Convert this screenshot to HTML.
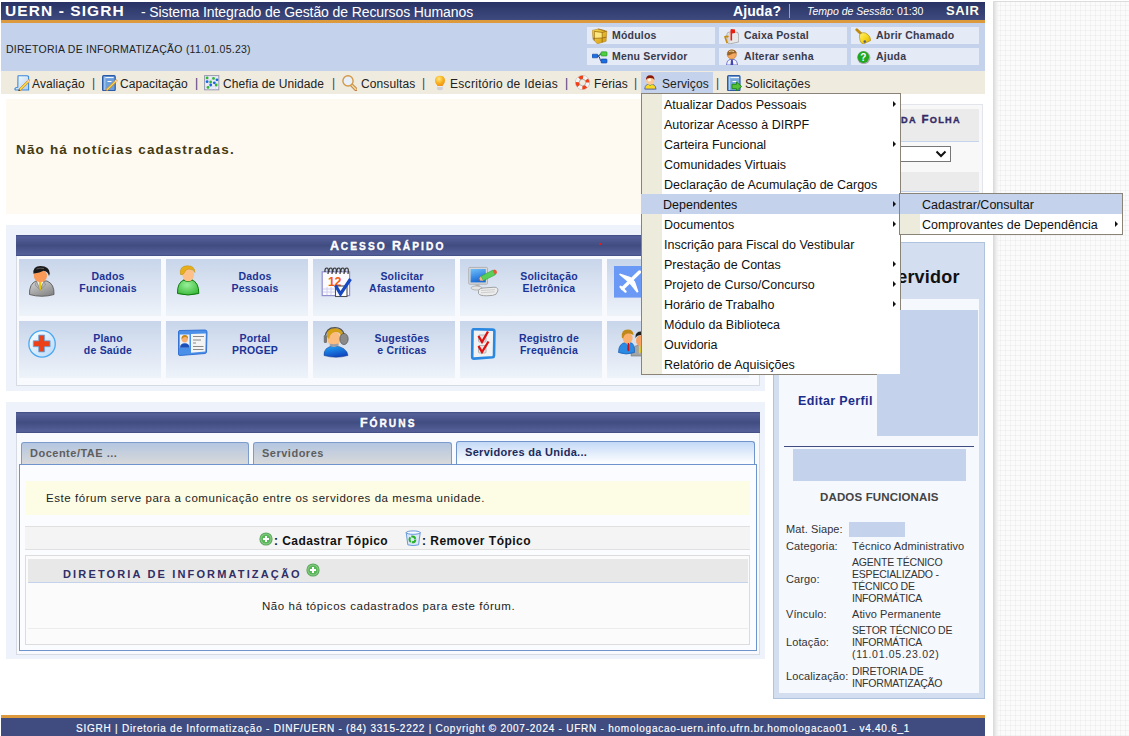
<!DOCTYPE html>
<html><head><meta charset="utf-8">
<style>
*{box-sizing:border-box}
html,body{margin:0;padding:0}
body{width:1129px;height:736px;overflow:hidden;position:relative;font-family:"Liberation Sans",sans-serif;
 background-color:#fbfbfb;
 background-image:repeating-linear-gradient(90deg,rgba(0,0,0,0.03) 0 1px,transparent 1px 5px),repeating-linear-gradient(0deg,rgba(0,0,0,0.03) 0 1px,transparent 1px 5px);}
.a{position:absolute}
.pg{left:0;top:0;width:993px;height:736px;background:#fff}
.shadow{left:993px;top:0;width:6px;height:736px;background:linear-gradient(90deg,#d8d8d8,#f0f0f0 60%,rgba(255,255,255,0))}
.topline{left:993px;top:1px;width:136px;height:1px;background:#dcdcdc}
/* header */
.hd{left:1px;top:2px;width:984px;height:18px;background:linear-gradient(#283264,#3e4a7f)}
.orange{left:1px;top:20px;width:984px;height:3px;background:#dd9a3c}
.lb{left:1px;top:23px;width:984px;height:48px;background:#c4d2eb}
.mbar{left:1px;top:71px;width:984px;height:23px;background:#efebdf}
.t{white-space:nowrap;line-height:1}
.btn{height:17px;width:128px;background:#e4eaf6}
.btn span{position:absolute;left:25px;top:2px;font-size:10.5px;font-weight:bold;color:#3a3a4c;letter-spacing:0.2px}
.btn svg{position:absolute;left:5px;top:0px}
.mi{font-size:12px;color:#222;top:78px;letter-spacing:0.1px}
.sep{font-size:12px;color:#3a3a78;top:77px}
.ic16{width:16px;height:16px}
.tile{width:142px;height:57px;background:linear-gradient(#c8d5ea,#eef3fa)}
.tl{left:39px;width:100px;top:11px;text-align:center;font-size:10.5px;font-weight:bold;color:#1c3496;line-height:12px;letter-spacing:0.2px}
.tab{top:442px;height:23px;border:1px solid #7c9dcc;border-bottom:none;border-radius:3px 3px 0 0;background:linear-gradient(#b4c6e0,#dadada)}
.tab span{position:absolute;left:8px;top:4px;font-size:11px;font-weight:bold;color:#5e5e5e;white-space:nowrap;letter-spacing:0.5px}
.tab.act{top:441px;height:23px;background:linear-gradient(#c4d9f6,#fafcff 90%);border-color:#6f94cc}
.tab.act span{color:#1c2a5c;top:4px;letter-spacing:0.3px}
.sd{font-size:11px;color:#333;white-space:nowrap;line-height:12px;letter-spacing:0.1px}
.up{font-size:10.5px;letter-spacing:-0.2px}
.dd{border:1px solid #8a8478;background:#fff}
.strip{left:0;top:0;width:20px;height:100%;background:#ecebdc}
.row{left:0;width:100%;height:20px}
.row.hl{background:#c4d2eb}
.row span{position:absolute;left:22px;top:4px;font-size:12.5px;color:#111;white-space:nowrap}
.arr{position:absolute;right:4px;top:6.5px;width:0;height:0;border-left:3.5px solid #111;border-top:3.5px solid transparent;border-bottom:3.5px solid transparent}
.sc{font-size:12.5px;font-weight:bold;color:#fff;letter-spacing:1.8px;-webkit-text-stroke:0.35px currentColor}
.sc s{text-decoration:none;font-size:10.2px;letter-spacing:2.05px}
.fo s{font-size:9.2px;letter-spacing:1.3px}
</style></head><body>
<div class="a pg"></div>
<div class="a shadow"></div>
<div class="a" style="left:993px;top:0;width:136px;height:1px;background:#fff"></div><div class="a topline"></div>

<!-- HEADER -->
<div class="a hd"></div>
<div class="a orange"></div>
<div class="a lb"></div>
<div class="a mbar"></div>
<div class="a t" style="left:5px;top:3px;font-size:15.5px;font-weight:bold;color:#fff;letter-spacing:1.08px">UERN - SIGRH</div>
<div class="a t" style="left:141px;top:5px;font-size:14px;color:#fff;letter-spacing:-0.1px">- Sistema Integrado de Gestão de Recursos Humanos</div>
<div class="a t" style="left:733px;top:4px;font-size:14px;font-weight:bold;color:#fff;letter-spacing:0.1px">Ajuda?</div>
<div class="a" style="left:789px;top:4px;width:1px;height:14px;background:#dd9a3c"></div>
<div class="a t" style="left:807px;top:6px;font-size:10.5px;color:#fff"><i>Tempo de Sessão:</i> 01:30</div>
<div class="a t" style="left:946px;top:4px;font-size:13px;font-weight:bold;color:#fffbe8;letter-spacing:0.6px">SAIR</div>

<div class="a t" style="left:6px;top:44px;font-size:10.5px;color:#222;letter-spacing:0.25px">DIRETORIA DE INFORMATIZAÇÃO (11.01.05.23)</div>


<!-- module buttons -->
<div class="a btn" style="left:587px;top:27px"><span>Módulos</span></div>
<div class="a btn" style="left:719px;top:27px"><span>Caixa Postal</span></div>
<div class="a btn" style="left:851px;top:27px"><span>Abrir Chamado</span></div>
<div class="a btn" style="left:587px;top:48px"><span>Menu Servidor</span></div>
<div class="a btn" style="left:719px;top:48px"><span>Alterar senha</span></div>
<div class="a btn" style="left:851px;top:48px"><span>Ajuda</span></div>
<svg class="a" style="left:592px;top:28px" width="16" height="16" viewBox="0 0 16 16">
 <defs><linearGradient id="gc" x1="0" y1="0" x2="1" y2="1"><stop offset="0" stop-color="#f8d850"/><stop offset="1" stop-color="#d49a10"/></linearGradient></defs>
 <path d="M0.2 2.4 L6.2 1 L14.8 3.2 L14.1 13.3 L5.3 15.8 L1 11.2Z" fill="url(#gc)"/>
 <path d="M2.4 3.5 L10.2 4.4 L10.2 10 L2.4 10.4Z" fill="#fce680"/>
 <path d="M2.3 3.4 L2.3 12.6 M2.3 3.4 L10.2 4.4 L14.8 3.2 M10.2 4.4 L10.2 14.6 M1 10.4 L10.2 10 L14.3 9.2 M6.2 1 L13.2 2.8" stroke="#8a5a08" stroke-width="0.8" fill="none" opacity="0.85"/>
 <path d="M0.2 2.4 L6.2 1 L14.8 3.2 L14.1 13.3 L5.3 15.8 L1 11.2Z" fill="none" stroke="#a87810" stroke-width="0.5"/>
</svg>
<svg class="a" style="left:723px;top:28px" width="16" height="16" viewBox="0 0 16 16">
 <path d="M4 6 Q4 4 7 4 L13 4 Q15.7 4 15.7 7 L15.7 14 L6 16 L4 14Z" fill="#e8e8e8" stroke="#a0a0a0" stroke-width="0.8"/>
 <path d="M6 16 L6 6.5 Q6 5 7.5 4.5" stroke="#c0c0c0" stroke-width="0.8" fill="none"/>
 <path d="M1 8.5 Q3 7 6 8 L5 9.5 L3 9.5 L5 15 L3.5 15.5 Z" fill="#c88a10"/>
 <rect x="7.5" y="1.5" width="1.6" height="11" fill="#e02010"/>
 <path d="M8 1 L12 1.5 L12 5 L9 5.5Z" fill="#e82010"/>
</svg>
<svg class="a" style="left:855px;top:28px" width="16" height="16" viewBox="0 0 16 16">
 <path d="M1.8 1.8 L6 5.8" stroke="#c08a10" stroke-width="2.8" stroke-linecap="round"/>
 <defs><linearGradient id="bel" x1="0" y1="0" x2="1" y2="1"><stop offset="0" stop-color="#fff27a"/><stop offset="0.5" stop-color="#f8d820"/><stop offset="1" stop-color="#d8a808"/></linearGradient></defs>
 <path d="M4.6 6.6 Q8 3 12.2 6 Q15.8 8.8 15.6 12.6 L8.4 15.9 Q5.6 15.4 5 12.2 Q4.2 9.2 4.6 6.6Z" fill="url(#bel)" stroke="#a88408" stroke-width="0.6"/>
 <circle cx="9.8" cy="13.6" r="1.3" fill="#5a6478"/>
</svg>
<svg class="a" style="left:592px;top:48px" width="16" height="16" viewBox="0 0 16 16">
 <path d="M6 8 Q7.5 8 8 6.5 Q8.5 6 9 6 M6 8 Q7.5 8 8 11 Q8.5 13 9 13" stroke="#303890" stroke-width="1" fill="none"/>
 <path d="M7 8 Q8 6 9 5.8" stroke="#30a030" stroke-width="1.2" fill="none"/>
 <rect x="0" y="6.2" width="6" height="3.6" rx="0.8" fill="#1a70e0" stroke="#1a3a9a" stroke-width="0.6"/>
 <rect x="9" y="3.8" width="6" height="4.2" rx="0.8" fill="#50d040" stroke="#208a20" stroke-width="0.6"/>
 <rect x="9" y="11" width="6" height="4" rx="0.8" fill="#1a70e0" stroke="#1a3a9a" stroke-width="0.6"/>
</svg>
<svg class="a" style="left:724px;top:48px" width="16" height="17" viewBox="0 0 16 17">
 <path d="M2.5 17 Q3 12 6 11.5 L10 11.5 Q13 12 13.5 17Z" fill="#f0f0ff" stroke="#6a70c8" stroke-width="0.9"/>
 <path d="M7 11.8 L8.8 11.8 L9.3 17 L6.5 17Z" fill="#4048b0"/>
 <circle cx="7.8" cy="6.4" r="4.6" fill="#f4a860" stroke="#b06a20" stroke-width="0.5"/>
 <path d="M3.2 7 Q2.8 1.8 7.8 1.8 Q12.6 1.8 12.6 5.6 Q10 4.6 7 6.6 Q5 8 3.2 7Z" fill="#9a6428"/>
 <path d="M5 3.5 Q7.5 2.5 10 3.5" stroke="#e8d0a0" stroke-width="1" fill="none"/>
</svg>
<svg class="a" style="left:855px;top:48px" width="16" height="16" viewBox="0 0 16 16">
 <circle cx="8.8" cy="9.6" r="6.6" fill="#9a9a9a" opacity="0.8"/>
 <circle cx="8.3" cy="9.1" r="5.8" fill="#20a820"/>
 <text x="8.4" y="12.9" font-size="10" font-weight="bold" fill="#fff" text-anchor="middle" font-family="Liberation Sans">?</text>
</svg>

<!-- menu bar -->
<div class="a" style="left:641px;top:72px;width:72px;height:21px;background:#c4d2eb"></div>
<svg class="a" style="left:14px;top:75px" width="16" height="16" viewBox="0 0 16 16">
 <defs><linearGradient id="pp1" x1="0" y1="0" x2="1" y2="1"><stop offset="0" stop-color="#ffffff"/><stop offset="1" stop-color="#a8ccf0"/></linearGradient></defs>
 <path d="M4.2 0.8 L13 0.8 Q15 0.8 14.6 3 L14.6 15 L2 15 Q0.6 15 1 13.4 Q1.6 12.2 3.8 12.2 L4 1Z" fill="url(#pp1)" stroke="#3a88d8" stroke-width="1.1"/>
 <path d="M6 16 L15.2 7 Q16 6 15.6 5 L14.6 4.6 L5 14 Z" fill="#f4d848" stroke="#d08830" stroke-width="0.8"/>
 <path d="M13.8 5.2 L15.5 7" stroke="#f8d0b0" stroke-width="1.6"/>
 <path d="M5 14 L6 16 L4.2 16.2Z" fill="#4a3010"/>
</svg>
<div class="a t mi" style="left:32px">Avaliação</div><div class="a t sep" style="left:92px">|</div>
<svg class="a" style="left:102px;top:75px" width="16" height="16" viewBox="0 0 16 16">
 <rect x="0.6" y="0.6" width="12.6" height="15" rx="1.2" fill="#6c9edc" stroke="#2a5aa6" stroke-width="1.2"/>
 <rect x="2.2" y="1.6" width="1.2" height="13.5" fill="#a8c8ee"/>
 <path d="M3.5 2.6 H11.6" stroke="#ffffff" stroke-width="1"/>
 <path d="M5.5 6.5 H9.5" stroke="#ffffff" stroke-width="1"/>
 <path d="M5 16 L14.6 6.8 Q15.4 6 15 5.2 L14 4.8 L4.2 14.2 Z" fill="#f4d848" stroke="#d08830" stroke-width="0.8"/>
 <path d="M13.2 5.4 L15 7" stroke="#f8d0b0" stroke-width="1.6"/>
</svg>
<div class="a t mi" style="left:120px">Capacitação</div><div class="a t sep" style="left:195px">|</div>
<svg class="a" style="left:204px;top:75px" width="16" height="16" viewBox="0 0 16 16">
 <rect x="0.6" y="0.6" width="14.2" height="14.2" fill="#eeeefa" stroke="#9898b0" stroke-width="1"/>
 <path d="M4.2 1 V14.5 M7.8 1 V14.5 M11.4 1 V14.5 M1 4.5 H14.5 M1 8 H14.5 M1 11.5 H14.5" stroke="#d8d8ec" stroke-width="0.6"/>
 <g fill="#30b830"><circle cx="3.1" cy="2.9" r="1.4"/><circle cx="9.5" cy="3.4" r="1.4"/><circle cx="6.6" cy="7" r="1.4"/><circle cx="12.2" cy="10" r="1.4"/><circle cx="4" cy="12.4" r="1.4"/></g>
 <g fill="#1a68d8"><circle cx="13" cy="4.8" r="1.4"/><circle cx="3.1" cy="6.7" r="1.4"/><circle cx="10.3" cy="7.8" r="1.4"/><circle cx="6.7" cy="10" r="1.4"/></g>
</svg>
<div class="a t mi" style="left:223px">Chefia de Unidade</div><div class="a t sep" style="left:332px">|</div>
<svg class="a" style="left:341px;top:75px" width="16" height="16" viewBox="0 0 16 16">
 <path d="M10.2 9.6 L14.8 14.2" stroke="#b86a28" stroke-width="3.4" stroke-linecap="round"/>
 <path d="M10.2 9.6 L14.8 14.2" stroke="#ecd494" stroke-width="2" stroke-linecap="round"/>
 <circle cx="7" cy="5.9" r="5.1" fill="#e8f0fa" stroke="#d49848" stroke-width="1.4"/>
</svg>
<div class="a t mi" style="left:361px">Consultas</div><div class="a t sep" style="left:422px">|</div>
<svg class="a" style="left:432px;top:75px" width="16" height="16" viewBox="0 0 16 16">
 <defs><radialGradient id="bl" cx="0.4" cy="0.3" r="0.7"><stop offset="0" stop-color="#ffe878"/><stop offset="0.6" stop-color="#f8b020"/><stop offset="1" stop-color="#f09010"/></radialGradient></defs>
 <path d="M3 5.5 Q3 0.8 8 0.8 Q13 0.8 13 5.5 Q13 8 11 10 L10.5 11.2 L5.5 11.2 L5 10 Q3 8 3 5.5Z" fill="url(#bl)"/>
 <path d="M5.2 11 H10.8 V14.5 Q8 16 5.2 14.5Z" fill="#d0d0d8"/>
 <path d="M5.2 11.5 H10.8" stroke="#f0f0ff" stroke-width="0.8"/>
</svg>
<div class="a t mi" style="left:450px;letter-spacing:0.3px">Escritório de Ideias</div><div class="a t sep" style="left:565px">|</div>
<svg class="a" style="left:575px;top:75px" width="16" height="16" viewBox="0 0 16 16">
 <circle cx="7.5" cy="7.5" r="6.9" fill="none" stroke="#8a8a8a" stroke-width="0.6"/>
 <circle cx="7.5" cy="7.5" r="5.15" fill="none" stroke="#f4f4f4" stroke-width="3.5"/>
 <circle cx="7.5" cy="7.5" r="5.15" fill="none" stroke="#f04018" stroke-width="3.5" stroke-dasharray="4.04 4.05" stroke-dashoffset="-4.04"/>
 <circle cx="7.5" cy="7.5" r="3.3" fill="none" stroke="#909090" stroke-width="0.6"/>
</svg>
<div class="a t mi" style="left:594px">Férias</div><div class="a t sep" style="left:634px">|</div>
<svg class="a" style="left:643px;top:74px" width="16" height="16" viewBox="0 0 16 16">
 <ellipse cx="7.6" cy="15" rx="6.5" ry="1.4" fill="#8890a8" opacity="0.6"/>
 <path d="M1.8 15 Q1.8 10 7.2 10 Q12.8 10 12.8 15Z" fill="#f8d820" stroke="#50609a" stroke-width="0.8"/>
 <path d="M5.5 10.4 Q7.2 12 9 10.4" stroke="#20a040" stroke-width="1" fill="none"/>
 <circle cx="7.2" cy="6.8" r="4.1" fill="#fcc890"/>
 <circle cx="6.4" cy="6" r="1.6" fill="#fff4e8"/>
 <path d="M3 6 Q2.8 1.2 7.2 1.2 Q11.6 1.2 11.4 6 Q10.5 3.8 7.2 4 Q4 3.8 3 6Z" fill="#8a1a08"/>
</svg>
<div class="a t mi" style="left:662px">Serviços</div><div class="a t sep" style="left:716px">|</div>
<svg class="a" style="left:726px;top:75px" width="16" height="16" viewBox="0 0 16 16">
 <rect x="1.6" y="0.6" width="12.4" height="15" rx="1.2" fill="#7aa8da" stroke="#2d5aa0" stroke-width="1.2"/>
 <rect x="3" y="1.6" width="1.2" height="13.5" fill="#b0d0f0"/>
 <path d="M4.5 2.6 H13" stroke="#ffffff" stroke-width="1"/>
 <path d="M6.5 6.5 H10.5" stroke="#ffffff" stroke-width="1"/>
 <path d="M6 9.3 H10.5 V7 L15.6 11.5 L10.5 15.8 V13.7 H6Z" fill="#58c038" stroke="#1a8a10" stroke-width="0.9"/>
</svg>
<div class="a t mi" style="left:745px">Solicitações</div>

<!-- news -->
<div class="a" style="left:6px;top:99px;width:753px;height:115px;background:#fffaf1"></div>
<div class="a t" style="left:16px;top:143px;font-size:13.5px;font-weight:bold;color:#443a12;letter-spacing:1.17px">Não há notícias cadastradas.</div>

<!-- acesso rapido -->
<div class="a" style="left:6px;top:225px;width:759px;height:166px;background:#eef3fb"></div>
<div class="a" style="left:16px;top:256px;width:744px;height:130px;border:1px solid #d6dbe3;border-top:none;background:#f8fafd"></div>
<div class="a" style="left:16px;top:235px;width:744px;height:21px;background:linear-gradient(#3f4a80 0,#55609a 8%,#414c81 50%,#55609a 92%,#3f4a80 100%)"></div>
<div class="a t sc" style="left:330px;top:240px">A<s>CESSO</s> R<s>ÁPIDO</s></div>
<div class="a" style="left:599px;top:243px;width:2px;height:2px;background:#e02020"></div>


<div class="a tile" style="left:19px;top:259px"><div class="a tl">Dados<br>Funcionais</div></div>
<div class="a tile" style="left:166px;top:259px"><div class="a tl">Dados<br>Pessoais</div></div>
<div class="a tile" style="left:313px;top:259px"><div class="a tl">Solicitar<br>Afastamento</div></div>
<div class="a tile" style="left:460px;top:259px"><div class="a tl">Solicitação<br>Eletrônica</div></div>
<div class="a tile" style="left:607px;top:259px"></div>
<div class="a tile" style="left:19px;top:321px"><div class="a tl">Plano<br>de Saúde</div></div>
<div class="a tile" style="left:166px;top:321px"><div class="a tl">Portal<br>PROGEP</div></div>
<div class="a tile" style="left:313px;top:321px"><div class="a tl">Sugestões<br>e Críticas</div></div>
<div class="a tile" style="left:460px;top:321px"><div class="a tl">Registro de<br>Frequência</div></div>
<div class="a tile" style="left:607px;top:321px"></div>

<!-- tile icons -->
<svg class="a" style="left:28px;top:265px" width="28" height="33" viewBox="0 0 28 33">
 <defs><linearGradient id="suit" x1="0" y1="0" x2="0.6" y2="1"><stop offset="0" stop-color="#d8d8d8"/><stop offset="1" stop-color="#8a8a8a"/></linearGradient></defs>
 <path d="M1.5 29.5 Q1 19 8 16 L19 16 Q26.5 19 26 29.5 Q14 33 1.5 29.5Z" fill="url(#suit)" stroke="#5a5a5a" stroke-width="0.9"/>
 <path d="M9 16 L12 24 L15.5 16Z" fill="#ffffff"/>
 <path d="M8.5 16.2 L11.8 24.5 L7 20 Z M16 16.2 L12.5 24.5 L17.5 20Z" fill="#b8b8b8" stroke="#707070" stroke-width="0.5"/>
 <path d="M11 16.3 L13.2 16.3 L13 24 L12.1 25.6 L11.3 24Z" fill="#f0d010" stroke="#a08800" stroke-width="0.3"/>
 <ellipse cx="12.4" cy="11" rx="6.6" ry="6.2" fill="#f99a58"/>
 <path d="M5.5 9 Q4.5 1 12.5 1 Q21.5 1 21.8 8.5 L21 11 Q19.8 6 15.5 5.8 Q12 8 6 8.5Z" fill="#1a1a1a"/>
 <path d="M8.5 4 Q12 2.6 16 3.6" stroke="#606060" stroke-width="0.9" fill="none"/>
</svg>
<svg class="a" style="left:176px;top:265px" width="26" height="32" viewBox="0 0 26 32">
 <defs><radialGradient id="grn" cx="0.45" cy="0.35" r="0.7"><stop offset="0" stop-color="#98f098"/><stop offset="1" stop-color="#38b838"/></radialGradient></defs>
 <path d="M1.5 28.5 Q1 17 9 14.5 L15 14.5 Q23 17 22.8 28.5 Q12 31.5 1.5 28.5Z" fill="url(#grn)" stroke="#0e7a0e" stroke-width="1"/>
 <path d="M7.5 14.8 Q12 18 16.5 14.8" stroke="#0e7a0e" stroke-width="1" fill="none"/>
 <ellipse cx="12.2" cy="10" rx="5.8" ry="6.3" fill="#fcc088"/>
 <path d="M4.5 9.5 Q3 0.8 11.5 0.8 Q19 0.8 18.8 7.5 Q17.5 3.8 12.5 4 Q9 4.5 8.5 7.5 Q7 10.5 4.5 9.5Z" fill="#e8b018" stroke="#b88808" stroke-width="0.5"/>
</svg>
<svg class="a" style="left:320px;top:266px" width="32" height="32" viewBox="0 0 32 32">
 <rect x="2.2" y="5.8" width="27.4" height="23.8" fill="#fbfbff" stroke="#9090d0" stroke-width="1.2"/>
 <path d="M3 23 H15 M3 26 H15 M7 21 V29 M11 21 V29" stroke="#c8c8ec" stroke-width="0.9"/>
 <g fill="none" stroke="#303030" stroke-width="1.2"><path d="M5 6 Q4.5 2 7 2 Q9 2 8 8"/><path d="M9 6 Q8.5 2 11 2 Q13 2 12 8"/><path d="M13 6 Q12.5 2 15 2 Q17 2 16 8"/><path d="M17 6 Q16.5 2 19 2 Q21 2 20 8"/><path d="M21 6 Q20.5 2 23 2 Q25 2 24 8"/><path d="M25 6 Q24.5 2 27 2 Q29 2 28 8"/></g>
 <text x="8" y="20" font-size="12.5" font-weight="bold" fill="#f45a10" font-family="Liberation Sans" letter-spacing="-0.5">12</text>
 <rect x="15.5" y="20" width="11.5" height="10.5" fill="#ffffff" stroke="#505050" stroke-width="1.1"/>
 <path d="M15.5 19.5 L20.5 28 L30.5 13" stroke="#1848c0" stroke-width="3.2" fill="none"/>
</svg>
<svg class="a" style="left:466px;top:265px" width="34" height="34" viewBox="0 0 34 34">
 <defs><linearGradient id="scr" x1="0" y1="0" x2="0.3" y2="1"><stop offset="0" stop-color="#70c0f8"/><stop offset="1" stop-color="#1a6ad8"/></linearGradient></defs>
 <rect x="2.7" y="2.4" width="18.8" height="16.8" rx="1" fill="#d8d8d8" stroke="#a8a8a8" stroke-width="0.8"/>
 <rect x="4.6" y="4" width="15.2" height="13.4" fill="url(#scr)"/>
 <rect x="9.5" y="19" width="4" height="3" fill="#b8b8b8"/>
 <ellipse cx="10.5" cy="23" rx="5.5" ry="2" fill="#e4e4e4" stroke="#a0a0a0" stroke-width="0.7"/>
 <path d="M12.5 27 Q12 23.5 17 23 L29 22.2 Q32.5 22.8 31.8 26 L30 29.2 Q28 30.8 20.5 30.8 Q13.5 30.8 12.5 28.5Z" fill="#ececec" stroke="#909090" stroke-width="0.8"/>
 <path d="M15 25.5 L29 24.6 M15 27.8 L28.5 26.8" stroke="#c0c0c0" stroke-width="0.7"/>
 <path d="M14.8 11.2 L26.8 5.2 L29.2 9.8 L17.2 15.8Z" fill="#58d058" stroke="#30a030" stroke-width="0.6"/>
 <path d="M26.8 5.2 L28.5 4.4 Q30.5 4.5 31 7 Q31.2 8.8 29.2 9.8Z" fill="#e85838"/>
 <path d="M14.8 11.2 L17.2 15.8 L12.3 15.6Z" fill="#f8b880"/>
 <path d="M13.2 14 L12.3 15.6 L14 15.6Z" fill="#303030"/>
</svg>
<svg class="a" style="left:614px;top:266px" width="27" height="32" viewBox="0 0 27 32">
 <rect x="0" y="0" width="27" height="31.6" fill="#6a9af6"/>
 <path d="M8.5 22.5 L25.5 6" stroke="#ffffff" stroke-width="3.4" stroke-linecap="round"/>
 <path d="M5 8.6 L6 7.4 L16.5 11 L21 15.5 L24.5 25.8 L23 26.8 L15.5 17.6 L11 13.6Z" fill="#ffffff"/>
 <path d="M6.6 20.8 L11.5 25.6" stroke="#ffffff" stroke-width="2.4" stroke-linecap="round"/>
</svg>
<svg class="a" style="left:28px;top:330px" width="28" height="28" viewBox="0 0 28 28">
 <defs><linearGradient id="pl" x1="0" y1="0" x2="1" y2="1"><stop offset="0" stop-color="#ffffff"/><stop offset="1" stop-color="#b8d8f8"/></linearGradient></defs>
 <circle cx="14.07" cy="13.9" r="13.2" fill="url(#pl)" stroke="#48a8f0" stroke-width="1.3"/>
 <path d="M10.7 5.1 H16.6 V10.8 H22.1 V16.7 H16.6 V21.9 H10.7 V16.7 H5.3 V10.8 H10.7Z" fill="#ec4018" stroke="#58b0f0" stroke-width="0.8"/>
</svg>
<svg class="a" style="left:177px;top:329px" width="32" height="28" viewBox="0 0 32 28">
 <path d="M1.5 3 Q1.5 1.5 3 1.5 L28 1 Q30 1 30 3 L29.5 23 Q29.5 24 28 24.5 L3 26.5 Q1.5 26.5 1.5 25Z" fill="#4a90e8" stroke="#2a6ad0" stroke-width="0.9"/>
 <path d="M14 5 L28.8 4.5 L28.3 22.6 L14 23.8Z" fill="#f4f4f4"/>
 <path d="M16 7.5 H27 M16 11 H24 M16 14 H19 M16 17.5 H26.5 M16 20.5 H26.5" stroke="#8a8a8a" stroke-width="1"/>
 <rect x="2.8" y="5.5" width="9.7" height="13.3" fill="#eaf2ff"/>
 <path d="M3 18.8 Q3 14.2 7.8 14.2 Q12.5 14.2 12.5 18.8Z" fill="#1a50b8"/>
 <circle cx="7.7" cy="10.3" r="3.1" fill="#f8b070"/>
 <path d="M4.5 10.5 Q4 6 7.8 6 Q11.5 6 11 10 Q10 7.5 7.5 8 Q5.5 8.5 4.5 10.5Z" fill="#c88818"/>
</svg>
<svg class="a" style="left:322px;top:327px" width="28" height="32" viewBox="0 0 28 32">
 <defs><linearGradient id="blb" x1="0" y1="0" x2="0.4" y2="1"><stop offset="0" stop-color="#20a8fa"/><stop offset="1" stop-color="#1048c0"/></linearGradient></defs>
 <path d="M2 28.5 Q1.5 19.5 12 19 Q24.5 19.5 26 28.5 Q14 32 2 28.5Z" fill="url(#blb)" stroke="#1a3a8a" stroke-width="0.5"/>
 <ellipse cx="11.8" cy="12" rx="6.4" ry="7.8" fill="#fbbc80"/>
 <path d="M5 10 Q4 1 12 1 Q20.5 1 21.5 8 L18.8 9 Q18 4.5 13 5 Q8 6 7 12Z" fill="#d4a018"/>
 <path d="M3.2 10 Q4 0.6 13 0.6 Q20 0.6 22 7" stroke="#505050" stroke-width="1.2" fill="none"/>
 <rect x="1.8" y="8" width="3.2" height="8" rx="1.2" fill="#787878"/>
 <ellipse cx="22" cy="12" rx="4.2" ry="5.6" fill="#8a8a8a" stroke="#4a4a4a" stroke-width="0.6"/>
 <path d="M8 17.8 Q12 19 16.5 17.5" stroke="#9aa0a8" stroke-width="2" fill="none"/>
</svg>
<svg class="a" style="left:470px;top:328px" width="26" height="32" viewBox="0 0 26 32">
 <path d="M2.5 2.8 Q2.5 1.2 4 1.2 L22.5 1.6 Q24.4 1.6 24.4 3.5 L24 27.5 Q24 29 22.5 29.3 L4 30.6 Q2.2 30.6 2.2 29Z" fill="#f2f2f2" stroke="#2a88e0" stroke-width="2.6"/>
 <rect x="8.5" y="7" width="7.5" height="7" rx="1" fill="#e4e4e4" stroke="#a8a8a8" stroke-width="0.8"/>
 <rect x="8.5" y="17.5" width="7.5" height="7.5" rx="1" fill="#e4e4e4" stroke="#a8a8a8" stroke-width="0.8"/>
 <path d="M8.5 8 L12 14 L18 3.5 M8.5 18 L12 24 L18.5 13.5" stroke="#e01010" stroke-width="2.3" fill="none"/>
</svg>
<svg class="a" style="left:617px;top:328px" width="24" height="32" viewBox="0 0 24 32">
 <path d="M14 28 Q14 18 22 17 Q30 18 30 28Z" fill="#a4a4a4" stroke="#707070" stroke-width="0.6"/>
 <ellipse cx="24" cy="12.8" rx="5" ry="5.6" fill="#f8a060"/>
 <path d="M18.5 10 Q18 3.5 24 3.5 Q30 3.5 30 9 Q28 6.5 24 7 Q20 7 18.5 10Z" fill="#202020"/>
 <path d="M22 17.5 L23.5 17.5 L23.8 24 L22.7 26 L21.8 24Z" fill="#f0d000"/>
 <path d="M1.5 24.5 Q1.5 15 9 14.5 L13 14.5 Q18 15 17.5 24.5 Q9 27.5 1.5 24.5Z" fill="#2a8ae4" stroke="#1a5ab0" stroke-width="0.7"/>
 <path d="M9.3 14.6 L13 14.6 L11.2 17.5Z" fill="#ffffff"/>
 <ellipse cx="10.6" cy="10" rx="5" ry="5.8" fill="#fcb070"/>
 <path d="M4.8 9.5 Q4 1.6 10.6 1.6 Q16.6 1.6 16.5 7.2 Q14 5 10.6 5.6 Q7 6 6.2 10.5Z" fill="#c08818"/>
 <path d="M10.6 15 L12 15 L12.3 22 L11.3 23.5 L10.3 22Z" fill="#d01010"/>
</svg>

<!-- foruns -->
<div class="a" style="left:6px;top:402px;width:759px;height:257px;background:#eef3fb"></div>
<div class="a" style="left:16px;top:412px;width:744px;height:21px;background:linear-gradient(#3f4a80 0,#55609a 8%,#414c81 50%,#55609a 92%,#3f4a80 100%)"></div>
<div class="a t sc" style="left:360px;top:417px">F<s>ÓRUNS</s></div>
<div class="a" style="left:16px;top:433px;width:744px;height:222px;background:#f8fafd;border:1px solid #d6dbe3;border-top:none"></div>
<div class="a tab" style="left:21px;width:228px"><span>Docente/TAE ...</span></div>
<div class="a tab" style="left:253px;width:199px"><span>Servidores</span></div>
<div class="a" style="left:19px;top:464px;width:738px;height:187px;border:1px solid #6f94cc;background:#fafcff"></div>
<div class="a tab act" style="left:456px;width:299px"><span>Servidores da Unida...</span></div>
<div class="a" style="left:26px;top:481px;width:724px;height:34px;background:#fdfde6"></div>
<div class="a t" style="left:46px;top:493px;font-size:11.5px;color:#222;letter-spacing:0.55px">Este fórum serve para a comunicação entre os servidores da mesma unidade.</div>
<div class="a" style="left:25px;top:526px;width:725px;height:24px;background:#f4f4f4;border-top:1px solid #e0e0e0;border-bottom:1px solid #e0e0e0"></div>
<svg class="a" style="left:259px;top:532px" width="14" height="14" viewBox="0 0 14 14"><circle cx="7" cy="7" r="6.6" fill="#5aa85a"/><circle cx="7" cy="7" r="5.6" fill="#8ccc8c"/><circle cx="7" cy="7" r="4.6" fill="#58b858"/><path d="M7 4 v6 M4 7 h6" stroke="#fff" stroke-width="2"/></svg>
<div class="a t" style="left:274px;top:535px;font-size:12px;font-weight:bold;color:#111;letter-spacing:0.45px">: Cadastrar Tópico</div>
<svg class="a" style="left:405px;top:530px" width="16" height="16" viewBox="0 0 16 16"><path d="M1.2 2.6 L15.2 2.6 L13.6 14.8 Q8 16.4 2.8 14.8Z" fill="#dae8f8" stroke="#5a90d8" stroke-width="0.9"/><ellipse cx="8.2" cy="2.6" rx="7" ry="1.7" fill="#f4faff" stroke="#4a80d0" stroke-width="0.8"/><circle cx="7.4" cy="9.4" r="2.9" fill="none" stroke="#28b028" stroke-width="2" stroke-dasharray="5 1.1"/></svg>
<div class="a t" style="left:422px;top:535px;font-size:12px;font-weight:bold;color:#111;letter-spacing:0.48px">: Remover Tópico</div>
<div class="a" style="left:25px;top:555px;width:725px;height:90px;border:1px solid #dcdcdc;background:#fbfbfb"></div>
<div class="a" style="left:28px;top:559px;width:720px;height:24px;background:#e8e8e8;border-bottom:1px solid #c4d2eb"></div>
<div class="a t" style="left:63px;top:569px;font-size:11px;font-weight:bold;color:#2f2f66;letter-spacing:2.15px">DIRETORIA DE INFORMATIZAÇÃO</div>
<svg class="a" style="left:306px;top:563px" width="14" height="14" viewBox="0 0 14 14"><circle cx="7" cy="7" r="6.6" fill="#5aa85a"/><circle cx="7" cy="7" r="5.6" fill="#8ccc8c"/><circle cx="7" cy="7" r="4.6" fill="#58b858"/><path d="M7 4 v6 M4 7 h6" stroke="#fff" stroke-width="2"/></svg>
<div class="a t" style="left:262px;top:601px;font-size:11.5px;color:#222;letter-spacing:0.55px">Não há tópicos cadastrados para este fórum.</div>
<div class="a" style="left:28px;top:628px;width:720px;height:1px;background:#ececec"></div>

<!-- sidebar -->
<div class="a" style="left:773px;top:104px;width:210px;height:130px;border:1px solid #e2e6ec;background:#f8f8f8"></div>
<div class="a" style="left:777px;top:109px;width:202px;height:33px;background:#ebebeb;border-bottom:1px solid #c4d4ec"></div>
<div class="a t sc fo" style="right:168px;top:114px;color:#332a66;font-size:11.5px;letter-spacing:1.3px">M<s>ARGEM</s> <s>DA</s> F<s>OLHA</s></div>
<div class="a" style="left:800px;top:146px;width:151px;height:16px;border:1px solid #777;background:#fff"></div>
<svg class="a" style="left:935px;top:150px" width="12" height="8" viewBox="0 0 12 8"><path d="M1.5 1.5 L6 6 L10.5 1.5" stroke="#111" stroke-width="2" fill="none"/></svg>
<div class="a" style="left:777px;top:172px;width:202px;height:20px;background:#ebebeb;border-bottom:1px solid #c4d4ec"></div>

<div class="a" style="left:773px;top:242px;width:212px;height:457px;background:#d3dff0;border:1px solid #afc3de"></div>
<div class="a t" style="left:885px;top:268px;font-size:18px;font-weight:bold;color:#111;letter-spacing:0.2px">Servidor</div>
<div class="a" style="left:779px;top:299px;width:200px;height:394px;background:#f5f8fd"></div>
<div class="a t" style="left:798px;top:395px;font-size:12.5px;font-weight:bold;color:#1c2e8c;letter-spacing:0.35px">Editar Perfil</div>
<div class="a" style="left:784px;top:446px;width:190px;height:1px;background:#404c80"></div>
<div class="a" style="left:793px;top:449px;width:173px;height:32px;background:#c4d2eb"></div>
<div class="a t" style="left:820px;top:492px;font-size:11.5px;font-weight:bold;color:#444;letter-spacing:0.15px">DADOS FUNCIONAIS</div>
<div class="a sd" style="left:786px;top:523px">Mat. Siape:</div>
<div class="a" style="left:849px;top:522px;width:56px;height:15px;background:#c4d2eb"></div>
<div class="a sd" style="left:786px;top:540px">Categoria:</div><div class="a sd" style="left:852px;top:540px">Técnico Administrativo</div>
<div class="a sd" style="left:786px;top:573px">Cargo:</div><div class="a sd up" style="left:852px;top:556px">AGENTE TÉCNICO<br>ESPECIALIZADO -<br>TÉCNICO DE<br>INFORMÁTICA</div>
<div class="a sd" style="left:786px;top:608px">Vínculo:</div><div class="a sd" style="left:852px;top:608px">Ativo Permanente</div>
<div class="a sd" style="left:786px;top:636px">Lotação:</div><div class="a sd up" style="left:852px;top:624px">SETOR TÉCNICO DE<br>INFORMÁTICA<br><span style="letter-spacing:0.7px">(11.01.05.23.02)</span></div>
<div class="a sd" style="left:786px;top:670px">Localização:</div><div class="a sd up" style="left:852px;top:665px">DIRETORIA DE<br>INFORMATIZAÇÃO</div>

<!-- footer -->
<div class="a" style="left:1px;top:715px;width:984px;height:3px;background:#dd9a3c"></div>
<div class="a" style="left:1px;top:718px;width:984px;height:18px;background:#404c80"></div>
<div class="a t" style="left:76px;top:724px;font-size:10px;color:#fff;letter-spacing:0.76px;-webkit-text-stroke:0.15px #fff">SIGRH | Diretoria de Informatização - DINF/UERN - (84) 3315-2222 | Copyright © 2007-2024 - UFRN - homologacao-uern.info.ufrn.br.homologacao01 - v4.40.6_1</div>
<div class="a dd" style="left:641px;top:93px;width:260px;height:282px"><div class="a strip"></div>
<div class="a row" style="top:0px"><span>Atualizar Dados Pessoais</span><b class="arr"></b></div>
<div class="a row" style="top:20px"><span>Autorizar Acesso à DIRPF</span></div>
<div class="a row" style="top:40px"><span>Carteira Funcional</span><b class="arr"></b></div>
<div class="a row" style="top:60px"><span>Comunidades Virtuais</span></div>
<div class="a row" style="top:80px"><span>Declaração de Acumulação de Cargos</span></div>
<div class="a row hl" style="top:100px;left:-1px;width:259px"><span>Dependentes</span><b class="arr"></b></div>
<div class="a row" style="top:120px"><span>Documentos</span><b class="arr"></b></div>
<div class="a row" style="top:140px"><span>Inscrição para Fiscal do Vestibular</span></div>
<div class="a row" style="top:160px"><span>Prestação de Contas</span><b class="arr"></b></div>
<div class="a row" style="top:180px"><span>Projeto de Curso/Concurso</span><b class="arr"></b></div>
<div class="a row" style="top:200px"><span>Horário de Trabalho</span><b class="arr"></b></div>
<div class="a row" style="top:220px"><span>Módulo da Biblioteca</span></div>
<div class="a row" style="top:240px"><span>Ouvidoria</span></div>
<div class="a row" style="top:260px"><span>Relatório de Aquisições</span></div>
</div>
<div class="a dd" style="left:899px;top:193px;width:224px;height:42px"><div class="a strip"></div>
<div class="a row hl" style="top:0px"><span>Cadastrar/Consultar</span></div>
<div class="a row" style="top:20px"><span>Comprovantes de Dependência</span><b class="arr"></b></div>
</div>
<div class="a" style="left:900px;top:310px;width:78px;height:126px;background:#c4d2eb"></div><div class="a" style="left:877px;top:374px;width:23px;height:62px;background:#c4d2eb"></div>

</body></html>
